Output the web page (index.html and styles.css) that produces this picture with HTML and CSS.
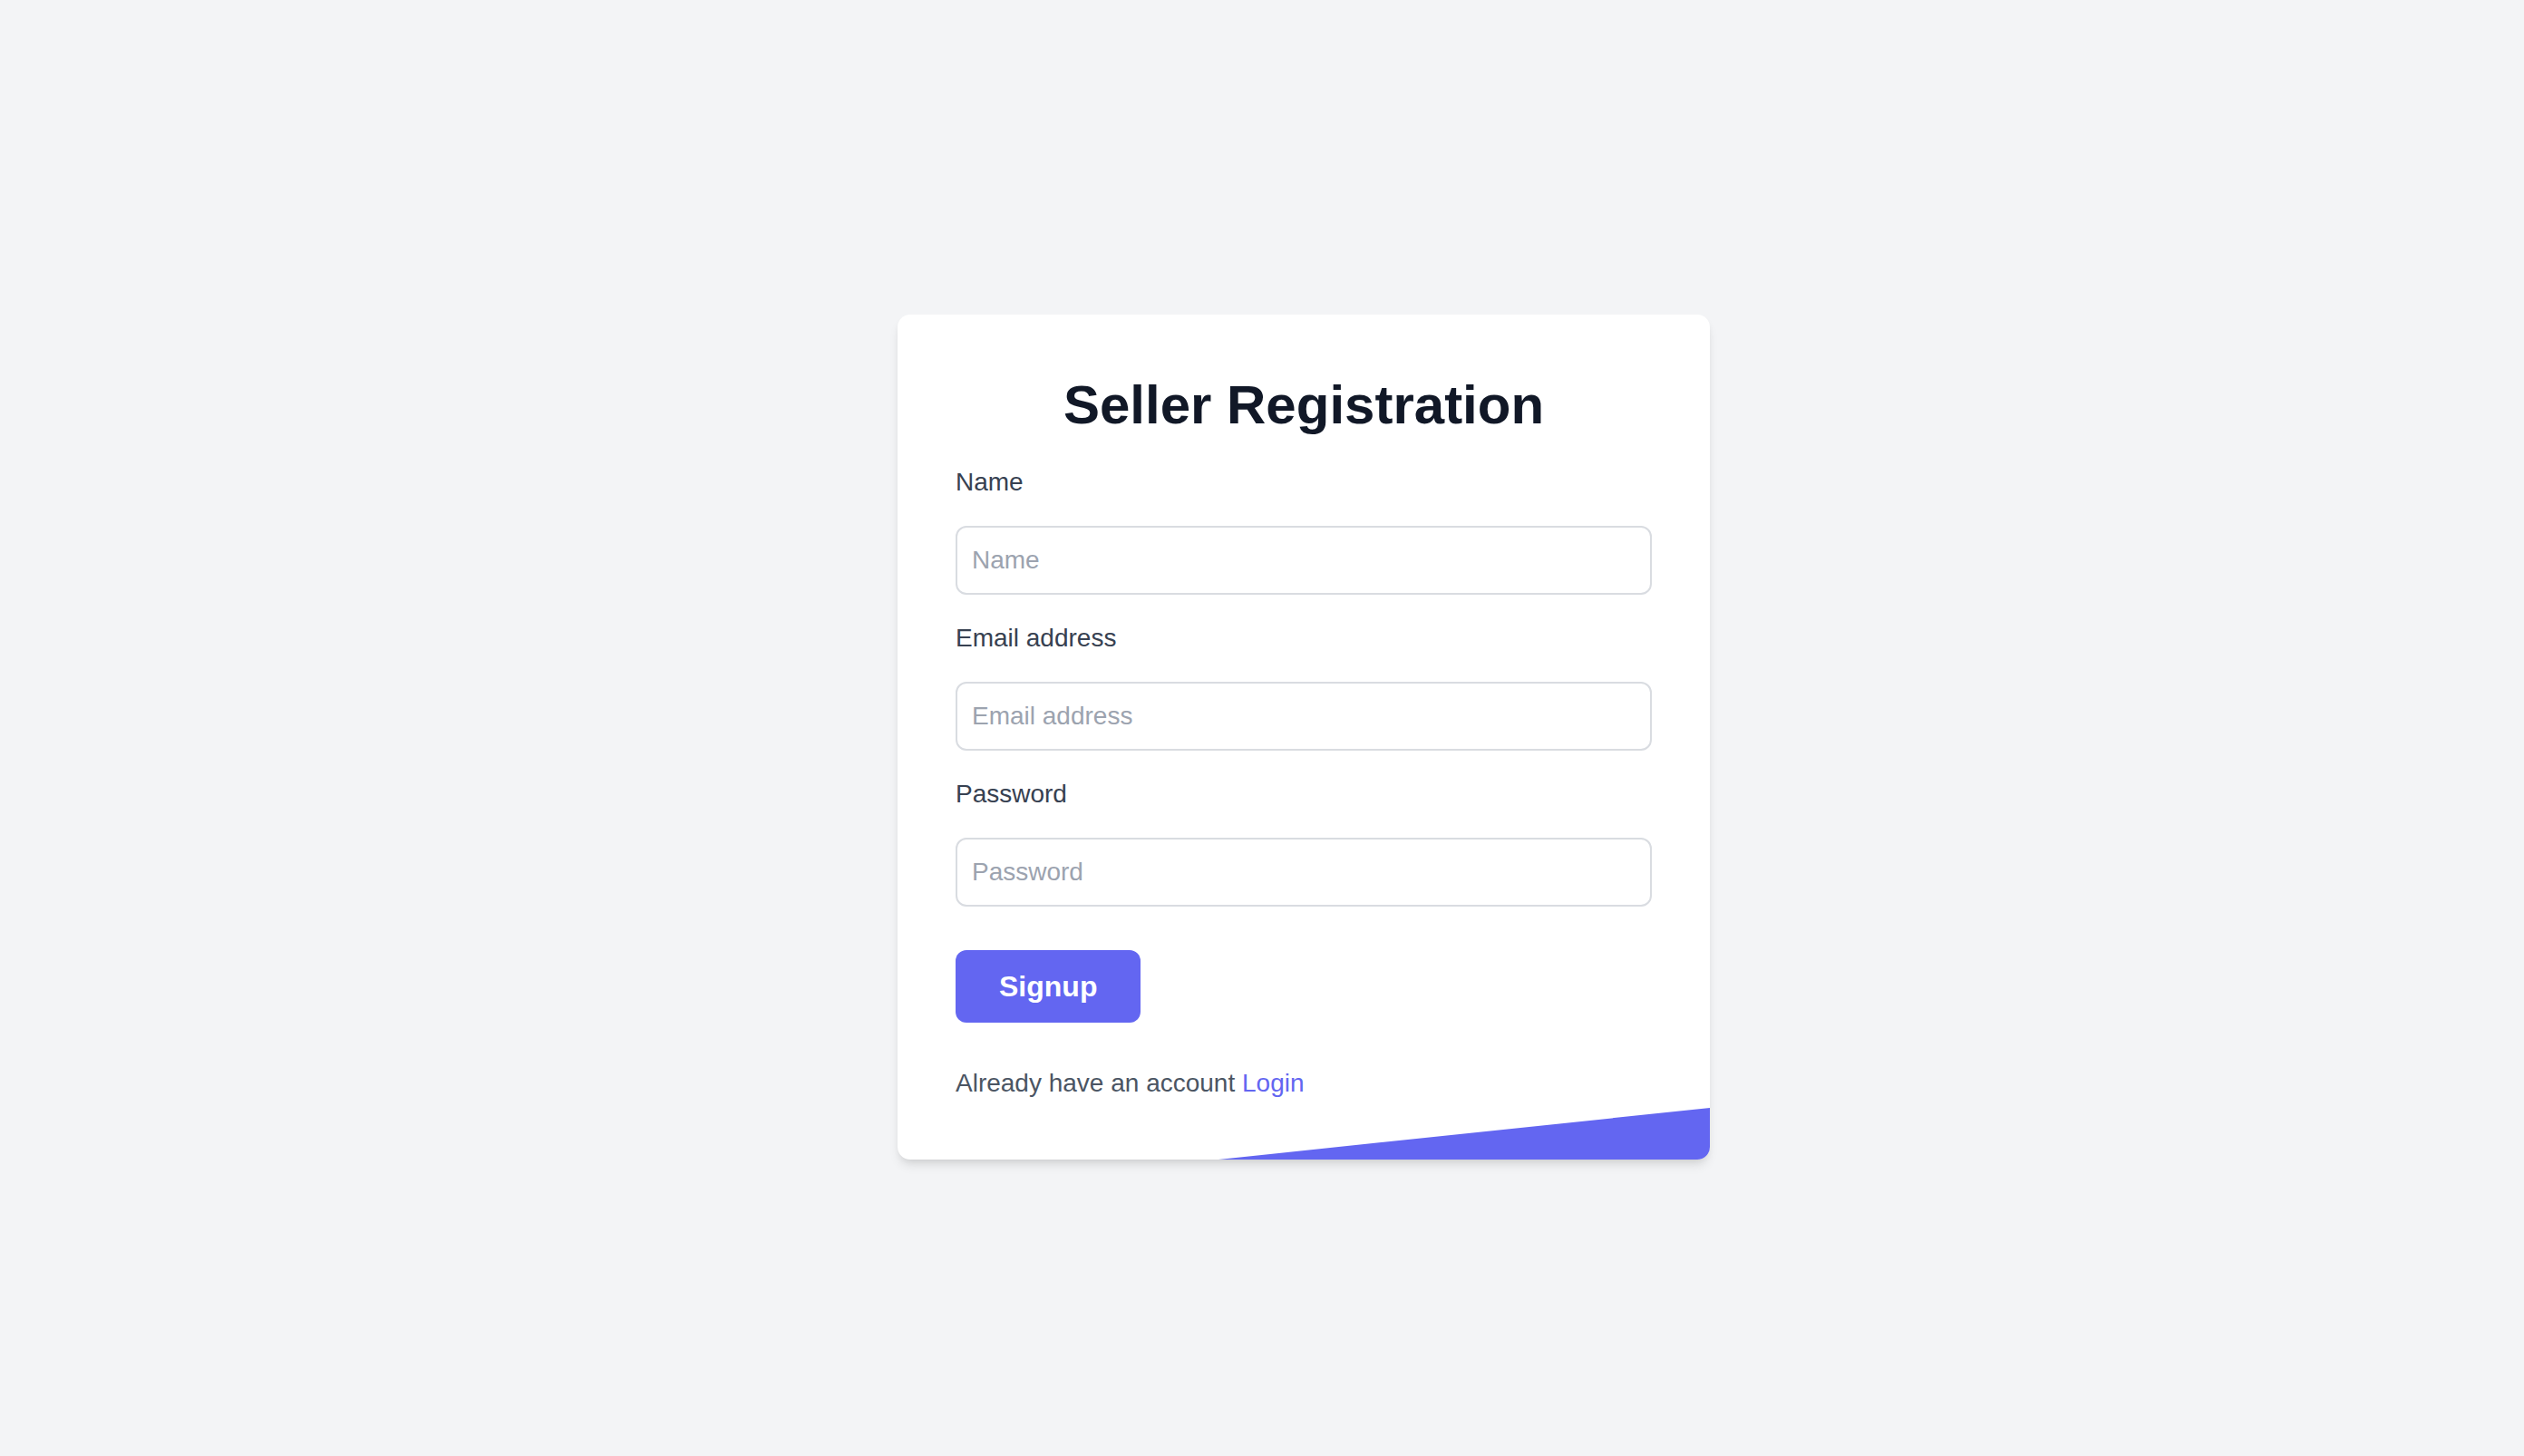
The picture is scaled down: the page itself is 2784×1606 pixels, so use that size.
FILE: index.html
```html
<!DOCTYPE html>
<html lang="en">
<head>
<meta charset="utf-8">
<title>Seller Registration</title>
<link rel="stylesheet" href="styles.css">
</head>
<body>
<main class="page">
  <section class="card">
    <h1 class="title">Seller Registration</h1>
    <form class="form">
      <div class="field">
        <label class="label" for="name">Name</label>
        <input class="input" id="name" type="text" placeholder="Name">
      </div>
      <div class="field">
        <label class="label" for="email">Email address</label>
        <input class="input" id="email" type="email" placeholder="Email address">
      </div>
      <div class="field field-last">
        <label class="label" for="password">Password</label>
        <input class="input" id="password" type="password" placeholder="Password">
      </div>
      <button class="btn" type="button">Signup</button>
    </form>
    <p class="note">Already have an account <a class="link" href="#">Login</a></p>
    <div class="corner"></div>
  </section>
</main>
</body>
</html>
```

FILE: styles.css
```css
* { box-sizing: border-box; }

html, body {
  margin: 0;
  padding: 0;
}

body {
  background: #f3f4f6;
  font-family: "Liberation Sans", Arial, Helvetica, sans-serif;
}

.page {
  min-height: 100vh;
  display: flex;
  justify-content: center;
  align-items: center;
  padding-left: 92px;
  padding-top: 20px;
}

.card {
  position: relative;
  overflow: hidden;
  width: 896px;
  background: #ffffff;
  border-radius: 14px;
  padding: 64px;
  box-shadow: 0 8px 12px -2px rgba(0, 0, 0, 0.1), 0 4px 8px -4px rgba(0, 0, 0, 0.1);
}

.title {
  margin: 0 0 29px 0;
  text-align: center;
  font-size: 60px;
  line-height: 72px;
  font-weight: 700;
  color: #111827;
}

.form {
  margin: 0;
  display: flex;
  flex-direction: column;
}

.field {
  display: flex;
  flex-direction: column;
  margin-bottom: 28px;
}

.field-last {
  margin-bottom: 0;
}

.label {
  display: block;
  font-size: 28px;
  line-height: 40px;
  color: #374151;
  margin-bottom: 28px;
}

.input {
  display: block;
  width: 100%;
  height: 76px;
  padding: 16px 16px;
  font-family: inherit;
  font-size: 28px;
  line-height: 40px;
  color: #111827;
  background: #ffffff;
  border: 2px solid #d9dce1;
  border-radius: 12px;
  outline: none;
}

.input::placeholder {
  color: #9ca3af;
}

.btn {
  align-self: flex-start;
  margin-top: 48px;
  height: 80px;
  padding: 16px 48px;
  font-family: inherit;
  font-size: 32px;
  line-height: 48px;
  font-weight: 700;
  color: #ffffff;
  background: #6366f1;
  border: none;
  border-radius: 12px;
  cursor: pointer;
}

.note {
  margin: 47px 0 0 0;
  font-size: 28px;
  line-height: 40px;
  color: #4b5563;
}

.link {
  color: #6366f1;
  text-decoration: none;
}

.corner {
  position: absolute;
  right: 0;
  bottom: 0;
  width: 542px;
  height: 57px;
  background: #6366f1;
  clip-path: polygon(0 100%, 100% 0, 100% 100%);
}
```
